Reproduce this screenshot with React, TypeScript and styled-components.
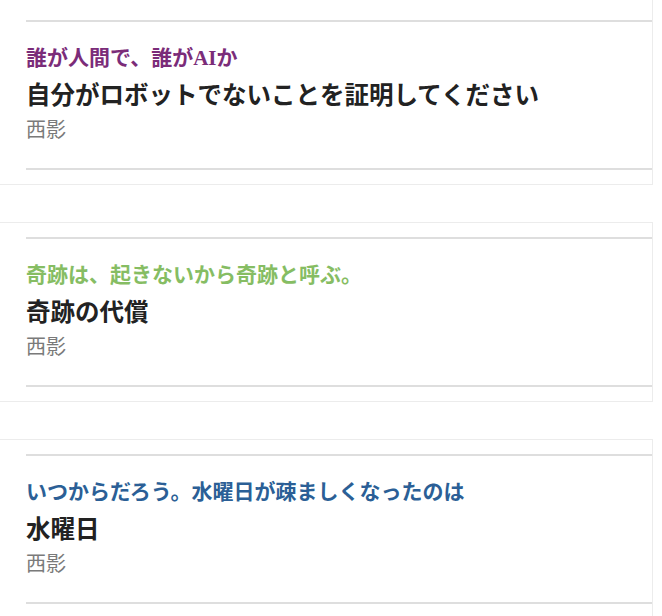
import React from "react";
import styled, { createGlobalStyle } from "styled-components";

const GlobalStyle = createGlobalStyle`
  html, body {
    margin: 0;
    padding: 0;
    background: #ffffff;
  }
  * { box-sizing: border-box; }
`;

const Page = styled.div`
  width: 662px;
  padding-right: 9px;
  display: flex;
  flex-direction: column;
  gap: 37px;
  overflow: hidden;
`;

const Card = styled.article<{ $cut?: boolean }>`
  background: #ffffff;
  border: 1px solid #ececec;
  border-left: none;
  border-top: ${(p) => (p.$cut ? "none" : "1px solid #ececec")};
  padding: ${(p) => (p.$cut ? "20px" : "14px")} 0 14px 26px;
`;

const Inner = styled.div`
  height: 150px;
  border-top: 2px solid #dedede;
  border-bottom: 2px solid #dedede;
  padding-top: 21px;
  display: flex;
  flex-direction: column;
`;

const Tagline = styled.div<{ $color: string }>`
  font-family: "Liberation Serif", "Noto Sans CJK JP", serif;
  font-size: 21px;
  line-height: 30px;
  font-weight: 700;
  color: ${(p) => p.$color};
  white-space: nowrap;
`;

const Title = styled.h2`
  margin: 3px 0 0;
  font-family: "Noto Sans CJK JP", sans-serif;
  font-size: 24.5px;
  line-height: 36px;
  font-weight: 600;
  color: #222222;
  white-space: nowrap;
`;

const Author = styled.div`
  margin-top: 2px;
  font-family: "Noto Sans CJK JP", sans-serif;
  font-size: 20px;
  line-height: 30px;
  font-weight: 400;
  color: #7a7a7a;
`;

const stories = [
  {
    tagline: "誰が人間で、誰がAIか",
    color: "#7b2c79",
    title: "自分がロボットでないことを証明してください",
    author: "西影",
  },
  {
    tagline: "奇跡は、起きないから奇跡と呼ぶ。",
    color: "#86bd63",
    title: "奇跡の代償",
    author: "西影",
  },
  {
    tagline: "いつからだろう。水曜日が疎ましくなったのは",
    color: "#2b5f96",
    title: "水曜日",
    author: "西影",
  },
];

export default function App() {
  return (
    <>
      <GlobalStyle />
      <Page>
        {stories.map((s, i) => (
          <Card key={i} $cut={i === 0}>
            <Inner>
              <Tagline $color={s.color}>{s.tagline}</Tagline>
              <Title>{s.title}</Title>
              <Author>{s.author}</Author>
            </Inner>
          </Card>
        ))}
      </Page>
    </>
  );
}
